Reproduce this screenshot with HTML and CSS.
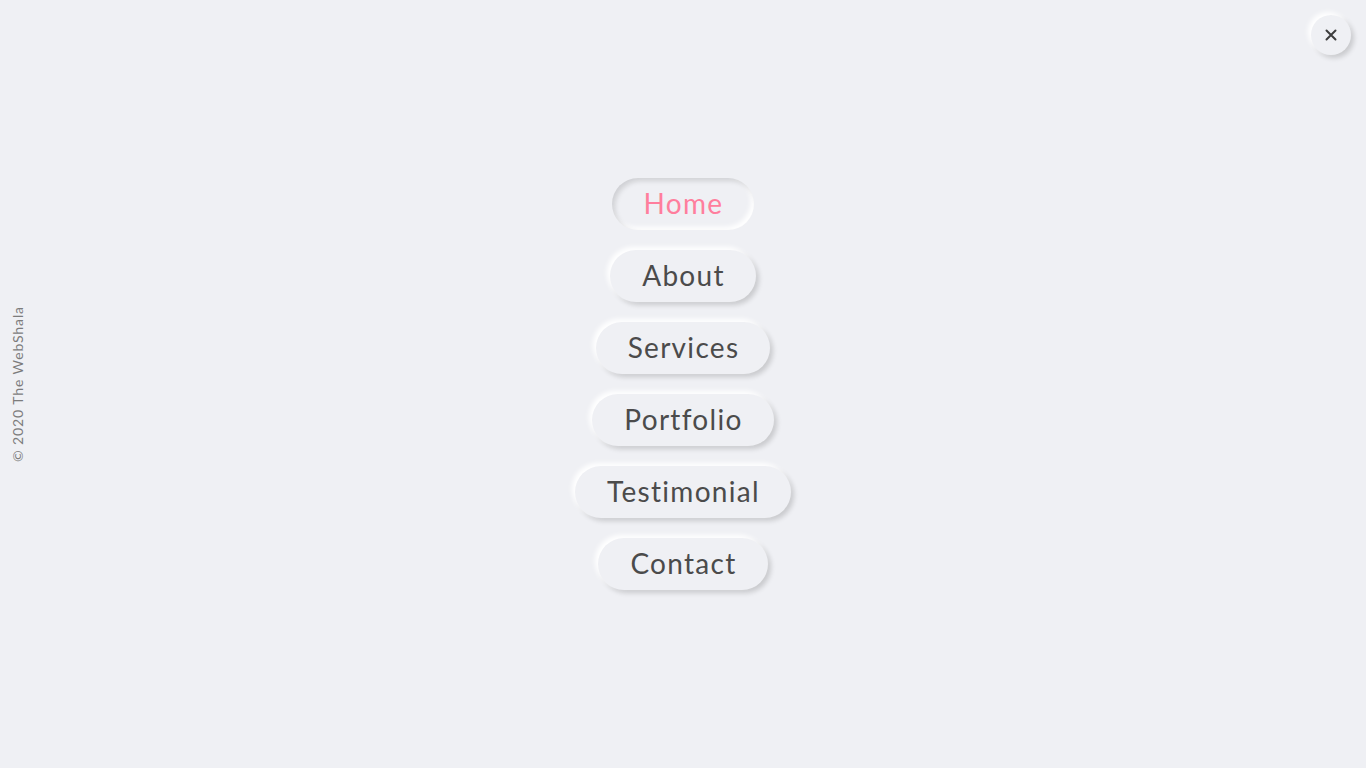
FILE: index.html
```html
<!DOCTYPE html>
<html lang="en">
<head>
    <meta charset="UTF-8">
    <meta name="viewport" content="width=device-width, initial-scale=1.0">
    <title>Neumorphic Menu</title>
    <link rel="stylesheet" href="styles.css">
</head>
<body>

    <!-- Close button -->
    <button type="button" class="close-btn" aria-label="Close">
        <svg width="12" height="12" viewBox="0 0 12 12">
            <path d="M1.5 1.5 L10.5 10.5 M10.5 1.5 L1.5 10.5" stroke="#3d3d3d" stroke-width="2" stroke-linecap="round"/>
        </svg>
    </button>

    <!-- Menu -->
    <nav class="menu">
        <a href="#" class="menu-item active">Home</a>
        <a href="#" class="menu-item">About</a>
        <a href="#" class="menu-item">Services</a>
        <a href="#" class="menu-item">Portfolio</a>
        <a href="#" class="menu-item">Testimonial</a>
        <a href="#" class="menu-item">Contact</a>
    </nav>

    <div class="copyright">&copy; 2020 The WebShala</div>

</body>
</html>
```

FILE: styles.css
```css
body {
    margin: 0;
    height: 100vh;
    background-color: #eff0f4;
    font-family: Lato, "Open Sans", sans-serif;
    display: flex;
    justify-content: center;
    align-items: center;
    overflow: hidden;
}

.menu {
    display: flex;
    flex-direction: column;
    align-items: center;
    gap: 20px;
}

.menu-item {
    display: block;
    padding: 0 31px 0 32px;
    height: 52px;
    line-height: 50px;
    border-radius: 26px;
    font-size: 28px;
    letter-spacing: 1.3px;
    color: #4b4b4b;
    text-decoration: none;
    background: #eff0f4;
    box-shadow: -3px -3px 5px #ffffff, 3px 3px 5px rgba(0, 0, 0, 0.16);
}

.menu-item.active {
    color: #ff7e9d;
    box-shadow: inset 3px 3px 5px rgba(0, 0, 0, 0.13), inset -3px -3px 5px #ffffff;
}

.close-btn {
    position: absolute;
    top: 15px;
    right: 15px;
    width: 40px;
    height: 40px;
    border: none;
    border-radius: 50%;
    background: #eff0f4;
    box-shadow: -3px -3px 5px #ffffff, 3px 3px 5px rgba(0, 0, 0, 0.16);
    display: flex;
    justify-content: center;
    align-items: center;
    cursor: pointer;
    padding: 0;
}

.copyright {
    position: absolute;
    left: 17px;
    top: 50%;
    transform: translate(-50%, -50%) rotate(-90deg);
    white-space: nowrap;
    font-size: 14px;
    letter-spacing: 0.9px;
    color: #7c7c7c;
}
```
